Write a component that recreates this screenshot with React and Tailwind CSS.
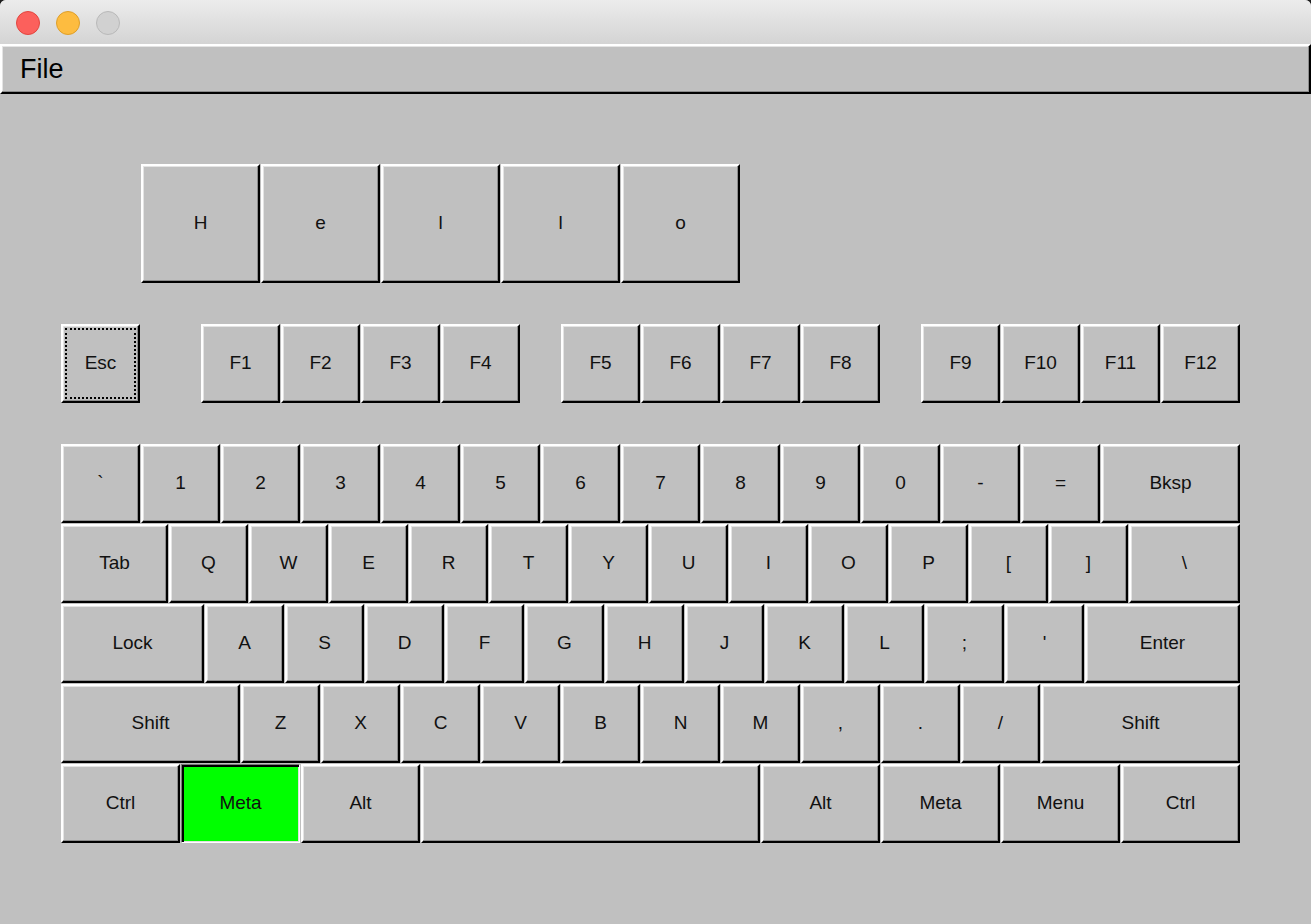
import React from "react";

const W = {
  80: "w-[80px]",
  108: "w-[108px]",
  112: "w-[112px]",
  120: "w-[120px]",
  140: "w-[140px]",
  144: "w-[144px]",
  156: "w-[156px]",
  180: "w-[180px]",
  200: "w-[200px]",
  340: "w-[340px]",
};

const raised =
  "border-2 border-t-white border-l-white border-r-black border-b-black shadow-[inset_-1px_-1px_0_#8c8c8c,inset_1px_1px_0_#e4e4e4] bg-[#c0c0c0]";
const sunken =
  "border border-t-[#7a7a7a] border-l-[#7a7a7a] border-r-white border-b-white shadow-[inset_2px_2px_0_#000,inset_-1px_-1px_0_#e0e0e0] bg-[#00ff00]";

function Key({ w = 80, h = "h-[80px]", label, focus, active }) {
  return (
    <div className={`${W[w]} ${h} pr-px pb-px shrink-0`}>
      <div
        className={`relative w-full h-full flex items-center justify-center text-[19px] text-[#111] ${
          active ? sunken : raised
        }`}
      >
        {focus && (
          <div className="absolute inset-[2px] border-2 border-dotted border-black" />
        )}
        <span className="relative">{label}</span>
      </div>
    </div>
  );
}

const rows = [
  [["`"], ["1"], ["2"], ["3"], ["4"], ["5"], ["6"], ["7"], ["8"], ["9"], ["0"], ["-"], ["="], ["Bksp", 140]],
  [["Tab", 108], ["Q"], ["W"], ["E"], ["R"], ["T"], ["Y"], ["U"], ["I"], ["O"], ["P"], ["["], ["]"], ["\\", 112]],
  [["Lock", 144], ["A"], ["S"], ["D"], ["F"], ["G"], ["H"], ["J"], ["K"], ["L"], [";"], ["'"], ["Enter", 156]],
  [["Shift", 180], ["Z"], ["X"], ["C"], ["V"], ["B"], ["N"], ["M"], [","], ["."], ["/"], ["Shift", 200]],
  [["Ctrl", 120], ["Meta", 120, true], ["Alt", 120], ["", 340], ["Alt", 120], ["Meta", 120], ["Menu", 120], ["Ctrl", 120]],
];

export default function App() {
  return (
    <div
      className="w-[1311px] h-[924px] bg-[#1e1e1e] overflow-hidden"
      style={{ fontFamily: '"Liberation Sans", Arial, sans-serif' }}
    >
      <div className="w-full h-full rounded-t-[6px] overflow-hidden bg-[#c0c0c0] flex flex-col">
        {/* title bar */}
        <div className="h-[44px] shrink-0 bg-gradient-to-b from-[#ececec] to-[#d4d4d4] flex items-center pl-[16px] pt-[2px] gap-[16px]">
          <div className="w-[24px] h-[24px] rounded-full bg-[#fc605c] border border-[#e2463f]" />
          <div className="w-[24px] h-[24px] rounded-full bg-[#fdbc40] border border-[#de9f2a]" />
          <div className="w-[24px] h-[24px] rounded-full bg-[#d1d1d1] border border-[#b9b9b9]" />
        </div>
        {/* menubar */}
        <div className={`h-[50px] shrink-0 flex items-center pl-[18px] ${raised}`}>
          <span className="text-[27px] text-black leading-none">File</span>
        </div>
        {/* content */}
        <div className="flex-1 pl-[61px] pt-[70px] flex flex-col">
          <div className="flex ml-[80px]">
            {["H", "e", "l", "l", "o"].map((c, i) => (
              <Key key={i} w={120} h="h-[120px]" label={c} />
            ))}
          </div>
          <div className="flex mt-[40px]">
            <Key label="Esc" focus />
            <div className="w-[60px] shrink-0" />
            {["F1", "F2", "F3", "F4"].map((c) => (
              <Key key={c} label={c} />
            ))}
            <div className="w-[40px] shrink-0" />
            {["F5", "F6", "F7", "F8"].map((c) => (
              <Key key={c} label={c} />
            ))}
            <div className="w-[40px] shrink-0" />
            {["F9", "F10", "F11", "F12"].map((c) => (
              <Key key={c} label={c} />
            ))}
          </div>
          <div className="flex flex-col mt-[40px]">
            {rows.map((r, ri) => (
              <div key={ri} className="flex">
                {r.map(([l, w, a], ki) => (
                  <Key key={ki} label={l} w={w || 80} active={a} />
                ))}
              </div>
            ))}
          </div>
        </div>
      </div>
    </div>
  );
}
